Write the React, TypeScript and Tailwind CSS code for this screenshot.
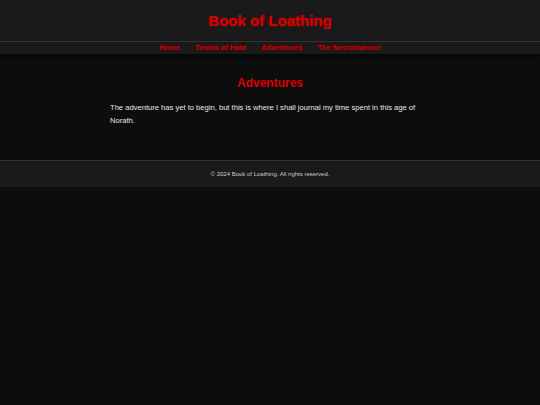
import React from "react";

export default function App() {
  return (
    <div className="min-h-[405px] bg-[#0d0d0d] text-[#e0e0e0]" style={{ fontFamily: '"Liberation Sans", Arial, sans-serif' }}>
      <header className="bg-[#1a1a1a] h-[41px] flex items-center justify-center">
        <h1 className="text-[15px] font-bold text-[#dd0000] leading-none [text-shadow:0_0_3px_rgba(200,0,0,0.5)]">Book of Loathing</h1>
      </header>
      <nav className="bg-[#1a1a1a] border-t border-[#333] h-[13px] flex items-center justify-center gap-[15px] shadow-[0_2px_4px_rgba(0,0,0,0.6)]">
        <a className="text-[7.5px] font-bold text-[#cc0000] leading-none [text-shadow:0_0_2px_#660000]">Home</a>
        <a className="text-[7.5px] font-bold text-[#cc0000] leading-none [text-shadow:0_0_2px_#660000]">Tenets of Hate</a>
        <a className="text-[7.5px] font-bold text-[#cc0000] leading-none [text-shadow:0_0_2px_#660000]">Adventures</a>
        <a className="text-[7.5px] font-bold text-[#cc0000] leading-none [text-shadow:0_0_2px_#660000]">The Necromancer</a>
      </nav>
      <main className="w-[320px] mx-auto pt-[22px] h-[106px]">
        <h2 className="text-[12px] font-bold text-[#dd0000] text-center leading-[15px]">Adventures</h2>
        <p className="mt-[10px] text-[7.6px] leading-[13px] text-[#e6e6e6]">
          The adventure has yet to begin, but this is where I shall journal my time spent in this age of Norath.
        </p>
      </main>
      <footer className="bg-[#1a1a1a] border-t border-[#333] h-[27px] flex items-center justify-center">
        <p className="text-[6px] text-[#cccccc] leading-none">© 2024 Book of Loathing. All rights reserved.</p>
      </footer>
    </div>
  );
}
